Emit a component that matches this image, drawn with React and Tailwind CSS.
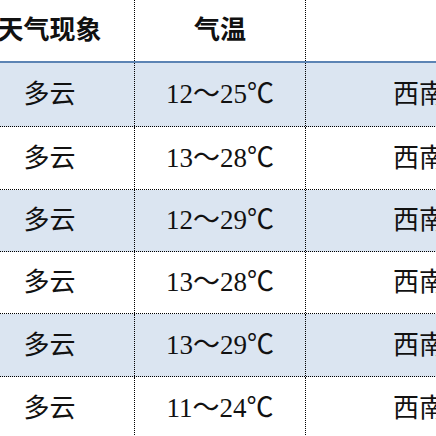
const rows = [
  { w: "多云", t: "12～25℃", d: "西南风", h: "h-[64px]", bg: "bg-[#dbe5f1]" },
  { w: "多云", t: "13～28℃", d: "西南风", h: "h-[63px]", bg: "bg-white" },
  { w: "多云", t: "12～29℃", d: "西南风", h: "h-[62px]", bg: "bg-[#dbe5f1]" },
  { w: "多云", t: "13～28℃", d: "西南风", h: "h-[62px]", bg: "bg-white" },
  { w: "多云", t: "13～29℃", d: "西南风", h: "h-[63px]", bg: "bg-[#dbe5f1]" },
  { w: "多云", t: "11～24℃", d: "西南风", h: "h-[63px]", bg: "bg-white" },
];

const font = { fontFamily: '"Liberation Serif", "Noto Sans CJK SC", serif' };

export default function App() {
  return (
    <div className="w-[436px] h-[436px] overflow-hidden bg-white text-[#111]" style={font}>
      <div className="-ml-[35px] w-[560px]">
        <div className="flex h-[63px] border-b-2 border-[#5c84b4] text-[26px] font-bold">
          <div className="w-[170px] flex items-center justify-center border-r border-dotted border-black">天气现象</div>
          <div className="w-[171px] flex items-center justify-center border-r border-dotted border-black">气温</div>
          <div className="flex-1" />
        </div>
        {rows.map((r, i) => (
          <div key={i} className={`flex ${r.h} ${r.bg} border-b border-dotted border-black text-[26px]`}>
            <div className="w-[170px] flex items-center justify-center border-r border-dotted border-black">{r.w}</div>
            <div className="w-[171px] flex items-center justify-center border-r border-dotted border-black text-[27px]">{r.t}</div>
            <div className="flex-1 flex items-center pl-[87px]">{r.d}</div>
          </div>
        ))}
      </div>
    </div>
  );
}
